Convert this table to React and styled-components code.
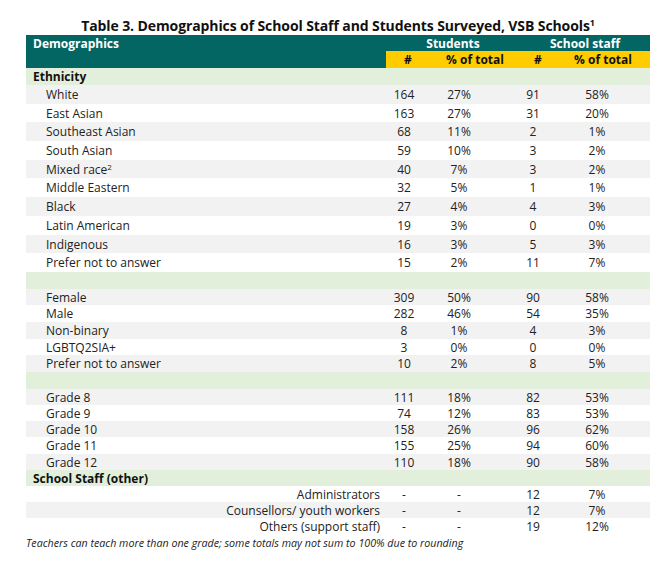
import React from "react";
import styled, { createGlobalStyle } from "styled-components";

const Global = createGlobalStyle`
  html, body { margin: 0; padding: 0; background: #ffffff; }
  body { font-family: "Open Sans", "Noto Sans", sans-serif; color: #222; }
`;

const COLS = "360px 36px 74px 74px 54px 26px";

const Page = styled.div`
  width: 624px;
  padding: 16px 0 0 26px;
`;

const Title = styled.h1`
  margin: 0;
  height: 19px;
  line-height: 19px;
  text-align: center;
  font-size: 14px;
  font-weight: 700;
  color: #111;
  letter-spacing: -0.1px;
  sup { font-size: 9px; line-height: 0; vertical-align: 5px; }
`;

const HeadTop = styled.div`
  display: grid;
  grid-template-columns: 360px 134px 130px;
  height: 16px;
  background: #036663;
  color: #fff;
  font-weight: 700;
  font-size: 12px;
  line-height: 18px;
`;

const HeadCell = styled.div`
  padding-left: ${(p) => p.$pl || 0}px;
  text-align: ${(p) => p.$align || "left"};
`;

const HeadSub = styled.div`
  display: grid;
  grid-template-columns: 360px 44px 90px 36px 94px;
  height: 16px;
  border-bottom: 1px solid #000;
  font-weight: 700;
  font-size: 12px;
  line-height: 17px;
  color: #111;
`;

const SubCell = styled.div`
  background: ${(p) => (p.$teal ? "#036663" : "#ffcc00")};
  text-align: center;
`;

const Row = styled.div`
  display: grid;
  grid-template-columns: ${COLS};
  height: ${(p) => p.$h}px;
  line-height: ${(p) => p.$h + 1}px;
  background: ${(p) =>
    p.$bg === "green" ? "#e2efda" : p.$bg === "gray" ? "#f2f2f2" : "#ffffff"};
  font-size: 12px;
  white-space: nowrap;
`;

const Label = styled.div`
  padding-left: ${(p) => (p.$group ? 7 : 20)}px;
  padding-right: ${(p) => (p.$right ? 6 : 0)}px;
  text-align: ${(p) => (p.$right ? "right" : "left")};
  font-weight: ${(p) => (p.$group ? 700 : 400)};
  color: ${(p) => (p.$group ? "#111" : "#222")};
  sup { font-size: 8px; line-height: 0; vertical-align: 4px; }
`;

const Num = styled.div`
  text-align: center;
  color: #222;
`;

const Foot = styled.div`
  font-style: italic;
  font-size: 10.7px;
  height: 16px;
  line-height: 17px;
  color: #222;
`;

const ethnicity = [
  ["White", "164", "27%", "91", "58%"],
  ["East Asian", "163", "27%", "31", "20%"],
  ["Southeast Asian", "68", "11%", "2", "1%"],
  ["South Asian", "59", "10%", "3", "2%"],
  ["Mixed race", "40", "7%", "3", "2%", true],
  ["Middle Eastern", "32", "5%", "1", "1%"],
  ["Black", "27", "4%", "4", "3%"],
  ["Latin American", "19", "3%", "0", "0%"],
  ["Indigenous", "16", "3%", "5", "3%"],
  ["Prefer not to answer", "15", "2%", "11", "7%"],
];

const gender = [
  ["Female", "309", "50%", "90", "58%"],
  ["Male", "282", "46%", "54", "35%"],
  ["Non-binary", "8", "1%", "4", "3%"],
  ["LGBTQ2SIA+", "3", "0%", "0", "0%"],
  ["Prefer not to answer", "10", "2%", "8", "5%"],
];

const grades = [
  ["Grade 8", "111", "18%", "82", "53%"],
  ["Grade 9", "74", "12%", "83", "53%"],
  ["Grade 10", "158", "26%", "96", "62%"],
  ["Grade 11", "155", "25%", "94", "60%"],
  ["Grade 12", "110", "18%", "90", "58%"],
];

const staff = [
  ["Administrators", "-", "-", "12", "7%"],
  ["Counsellors/ youth workers", "-", "-", "12", "7%"],
  ["Others (support staff)", "-", "-", "19", "12%"],
];

function DataRows({ rows, h, startGray = true, right = false }) {
  return rows.map((r, i) => {
    const gray = startGray ? i % 2 === 0 : i % 2 === 1;
    return (
      <Row key={r[0] + i} $h={h} $bg={gray ? "gray" : "white"}>
        <Label $right={right}>
          {r[0]}
          {r[5] && <sup>2</sup>}
        </Label>
        <Num>{r[1]}</Num>
        <Num>{r[2]}</Num>
        <Num>{r[3]}</Num>
        <Num>{r[4]}</Num>
        <div />
      </Row>
    );
  });
}

function GroupRow({ label, h = 17 }) {
  return (
    <Row $h={h} $bg="green">
      <Label $group>{label}</Label>
    </Row>
  );
}

export default function App() {
  return (
    <Page>
      <Global />
      <Title>
        Table 3. Demographics of School Staff and Students Surveyed, VSB Schools<sup>1</sup>
      </Title>
      <HeadTop>
        <HeadCell $pl={7}>Demographics</HeadCell>
        <HeadCell $align="center">Students</HeadCell>
        <HeadCell $align="center">School staff</HeadCell>
      </HeadTop>
      <HeadSub>
        <SubCell $teal />
        <SubCell>#</SubCell>
        <SubCell>% of total</SubCell>
        <SubCell>#</SubCell>
        <SubCell>% of total</SubCell>
      </HeadSub>
      <GroupRow label="Ethnicity" />
      <DataRows rows={ethnicity} h={18.7} />
      <GroupRow label="" />
      <DataRows rows={gender} h={16.6} />
      <GroupRow label="" />
      <DataRows rows={grades} h={16.2} />
      <GroupRow label="School Staff (other)" h={16} />
      <DataRows rows={staff} h={16.3} startGray={false} right />
      <Foot>Teachers can teach more than one grade; some totals may not sum to 100% due to rounding</Foot>
    </Page>
  );
}
